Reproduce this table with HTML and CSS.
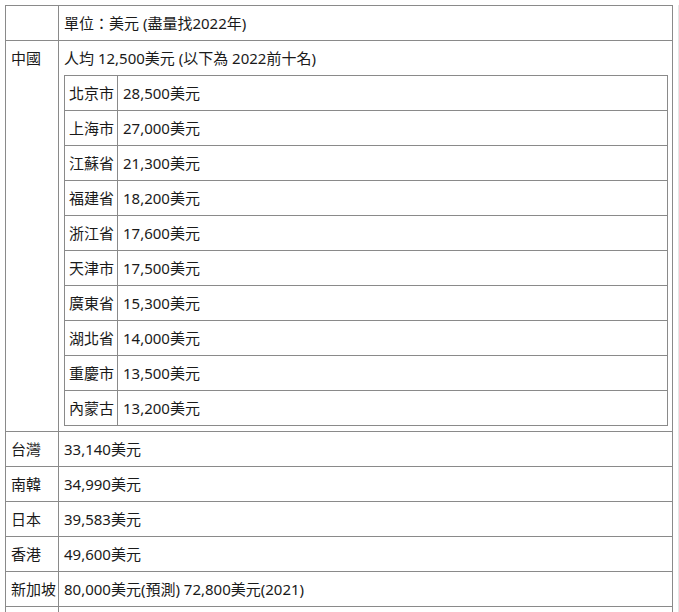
FILE: index.html
```html
<!DOCTYPE html>
<html lang="zh-Hant">
<head>
<meta charset="utf-8">
<link rel="stylesheet" href="styles.css">
</head>
<body>
<div class="page">
<table class="outer">
  <tr><td class="k"></td><td class="v">單位：美元 (盡量找2022年)</td></tr>
  <tr>
    <td class="k">中國</td>
    <td class="v">人均 12,500美元 (以下為 2022前十名)
      <table class="inner">
        <tr><td class="ik">北京市</td><td class="iv">28,500美元</td></tr>
        <tr><td class="ik">上海市</td><td class="iv">27,000美元</td></tr>
        <tr><td class="ik">江蘇省</td><td class="iv">21,300美元</td></tr>
        <tr><td class="ik">福建省</td><td class="iv">18,200美元</td></tr>
        <tr><td class="ik">浙江省</td><td class="iv">17,600美元</td></tr>
        <tr><td class="ik">天津市</td><td class="iv">17,500美元</td></tr>
        <tr><td class="ik">廣東省</td><td class="iv">15,300美元</td></tr>
        <tr><td class="ik">湖北省</td><td class="iv">14,000美元</td></tr>
        <tr><td class="ik">重慶市</td><td class="iv">13,500美元</td></tr>
        <tr><td class="ik">內蒙古</td><td class="iv">13,200美元</td></tr>
      </table>
    </td>
  </tr>
  <tr><td class="k">台灣</td><td class="v">33,140美元</td></tr>
  <tr><td class="k">南韓</td><td class="v">34,990美元</td></tr>
  <tr><td class="k">日本</td><td class="v">39,583美元</td></tr>
  <tr><td class="k">香港</td><td class="v">49,600美元</td></tr>
  <tr><td class="k">新加坡</td><td class="v">80,000美元(預測) 72,800美元(2021)</td></tr>
  <tr><td class="k">&nbsp;</td><td class="v">&nbsp;</td></tr>
</table>
</div>
</body>
</html>
```
FILE: styles.css
```css
html, body {
  margin: 0;
  padding: 0;
  background: #ffffff;
}
body {
  padding: 5px 0 0 5px;
  font-family: "Noto Sans", "Noto Sans CJK TC", sans-serif;
  font-size: 15px;
  color: #1a1a1a;
  overflow: hidden;
}
.page {
  display: inline-block;
  padding-right: 5px;
  border-right: 1px solid #e6e6e6;
}
table {
  border-collapse: separate;
  border-spacing: 0;
  table-layout: fixed;
}
td {
  vertical-align: top;
  line-height: 24px;
  border-right: 1px solid #8a8a8a;
  border-bottom: 1px solid #8a8a8a;
}
.outer {
  width: 668px;
  border-left: 1px solid #8a8a8a;
  border-top: 1px solid #8a8a8a;
}
.k {
  width: 44px;
  padding: 5px 3px 5px 5px;
  white-space: nowrap;
}
.v {
  padding: 5px 4px 5px 5px;
}
.inner {
  width: 604px;
  margin-top: 5px;
  border-left: 1px solid #8a8a8a;
  border-top: 1px solid #8a8a8a;
}
.ik {
  width: 45px;
  padding: 5px 3px 5px 4px;
  white-space: nowrap;
}
.iv {
  padding: 5px 4px 5px 5px;
}
```
